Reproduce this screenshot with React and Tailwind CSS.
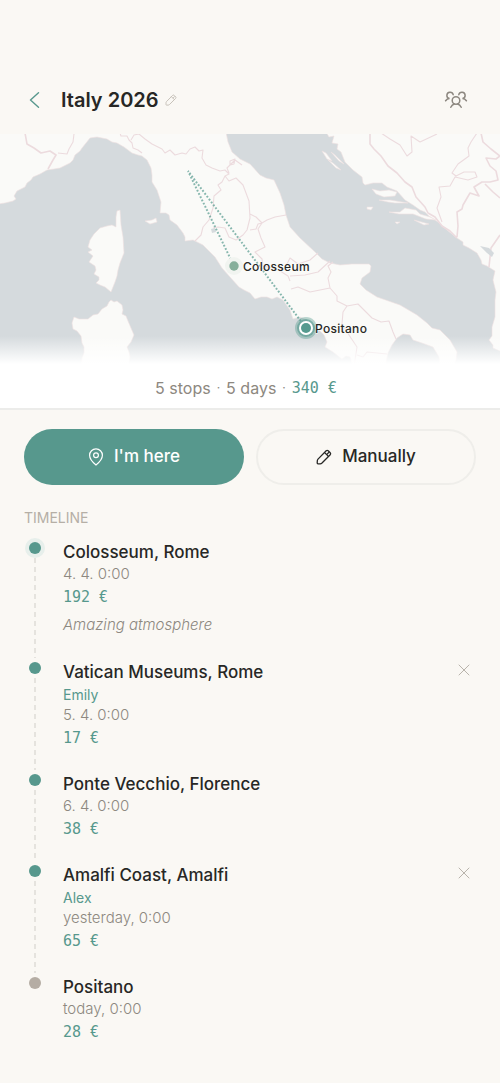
import { useState } from "react";

const stops = [
  {
    id: 1,
    name: "Colosseum, Rome",
    date: "4. 4. 0:00",
    price: "192 €",
    note: "Amazing atmosphere",
    current: true,
  },
  {
    id: 2,
    name: "Vatican Museums, Rome",
    author: "Emily",
    date: "5. 4. 0:00",
    price: "17 €",
  },
  { id: 3, name: "Ponte Vecchio, Florence", date: "6. 4. 0:00", price: "38 €" },
  {
    id: 4,
    name: "Amalfi Coast, Amalfi",
    author: "Alex",
    date: "yesterday, 0:00",
    price: "65 €",
  },
  {
    id: 5,
    name: "Positano",
    date: "today, 0:00",
    price: "28 €",
    muted: true,
  },
];

const land = [
  // France and Italy
  "M-2 132H226L228 142L232 152L240 159L250 164L260 175L266 178L274 180L280 193L284 205L286 215L290 227L300 238L315 252L322 259L330 263L340 265L352 264L369 264L371 266L370 272L362 278L360 284L366 290L377 297L400 305L417 315L427 323L432 328L440 330L450 340L457 352L456 360L453 367H440L439 357L433 347L422 343L413 340L410 335L403 334L397 338L392 345L388 353L385 367H353L350 357L346 356L342 359L333 352L325 347L327 342L324 335L317 328L307 320L300 317L293 319L290 310L283 300L277 297L272 299L267 297L261 297L255 299L250 293L244 290L239 287L230 277L222 268L215 257L203 245L193 240L185 241L185 237L183 233L177 225L170 220L169 215L166 213L163 213L160 213L161 202L157 190L152 182L152 175L151 168L147 160L142 156L138 155L132 153L124 147L117 143L112 142L107 139L97 137L90 138L86 143L82 148L80 151L75 155L73 160L70 163L60 168L54 169L47 170L40 174L33 177L31 180L27 183L25 187L17 191L14 196L16 199L13 201L5 203L-2 204Z",
  // Balkans
  "M326 132L329 137L334 136L332 143L338 144L337 149L341 152L345 162L353 170L362 177L363 183L365 185L373 183L382 183L387 187L397 191L405 200L413 205L420 210L425 212L429 216L438 222L447 230L457 238L463 242L463 245L469 248L477 253L481 260L482 264L487 266L495 271L493 280L496 292L495 300L495 308L495 317L492 327L492 336L489 340L493 345L493 348L502 352V132Z",
  // Corsica
  "M117 211L120 210L121 225L123 237L124 253L120 263L118 270L117 276L115 282L113 287L111 292L105 287L100 285L96 283L99 280L99 277L94 274L96 270L95 266L89 262L93 256L88 252L92 250L88 247L90 240L94 234L100 228L107 226L112 225L116 227L116 217Z",
  // Sardinia
  "M111 300L114 302L117 301L122 305L123 310L122 314L126 316L128 321L131 328L134 335L131 342L127 347L129 352L130 357L128 368H81L82 358L84 353L84 347L82 343L81 336L77 331L73 329L72 323L74 317L79 319L88 319L93 315L98 314L102 309L107 306L109 302Z",
  // islands
  "M322 151L326 153L332 161L327 159ZM331 152L335 155L344 164L339 161ZM328 160L333 163L341 170L336 168ZM372 189L380 191L389 190L397 192L395 196L384 197L376 194ZM379 200L390 200L408 203L395 203L388 202ZM367 207L373 207L371 210L367 209ZM389 212L400 212L405 208L416 210L420 214L430 217L436 220L426 219L413 214L399 214ZM414 220L429 224L424 225ZM395 222L400 222L397 224ZM145 221L152 220L156 218L157 222L150 224Z",
];

const regions =
  "M120 133L121 136L127 136L129 140L132 143L133 148L138 150L142 153M131 140L134 135L139 134L145 139L152 144L162 149L165 153L170 150L175 155L182 153L186 154L190 149L195 147L199 151L203 150L202 158L206 165L212 168L220 171L225 170L229 174L225 176L222 182L218 185L221 190L214 196L213 208L209 220L203 227L201 235L195 241M229 173L227 168L235 160L242 165M230 161L235 159L234 164L230 165ZM225 176L229 181L236 178L243 185L249 201L250 218L247 230L243 235L236 240L229 237L225 228L218 227L213 228M250 214L256 217L262 223L267 220L275 217L286 215M262 223L258 229L261 238L265 247L255 252L262 259L263 266L277 269L288 276L290 281M250 230L256 229L258 224L262 223M286 266L290 258L298 264L310 260L318 253M290 276L305 275L318 272L330 261M291 289L298 287L310 292L325 289L330 288L328 278L331 272L328 266L333 262M330 288L337 296L337 301L347 306L343 312L342 324L349 335L357 347L354 367M347 306L358 304L365 311L372 318L381 322L389 321L393 332L396 339M381 133L390 139L400 145L407 156L412 152L411 136L420 142L437 134M477 133L471 142L468 148L469 156L458 164L452 173L456 176L464 172L475 172L477 177L468 180L455 177L450 186L439 187L441 197L437 208L442 222M357 355L363 357L367 352L377 353L387 354M74 134L73 142L69 149L67 154L58 153";

const countries =
  "M25 133L27 144L34 148L41 153L50 151L56 155L53 160L48 169M370 133L370 144L374 149L381 156L388 166L397 173L405 182L412 187L416 197L425 207L428 213L435 217L442 226L450 231L457 238M481 133L483 142L491 149L500 156L496 159L486 158L490 166L496 171L498 180L490 182L482 182L474 187L479 196L470 193L463 205L462 209L457 212L458 226L457 237M485 184L493 192L500 198M500 235L491 248L489 267";

function PencilIcon({ className }) {
  return (
    <svg
      className={className}
      viewBox="0 0 16 16"
      fill="none"
      stroke="currentColor"
      strokeWidth="1.3"
      strokeLinejoin="round"
      strokeLinecap="round"
      aria-hidden="true"
    >
      <path d="M1.3 12.2Q1.2 11 2 10.1L10.2 1.8Q11.2 .9 12.2 1.8L14.2 3.8Q15.1 4.8 14.2 5.8L6 14Q5.2 14.7 4.2 14.8L2 14.8Q1.2 14.7 1.2 14Z" />
      <path d="M8.600 3.600L12.400 7.400M11 5.200L12.800 3.400" />
    </svg>
  );
}

function GroupIcon() {
  return (
    <svg
      className="h-5 w-6"
      viewBox="0 0 24 20"
      fill="none"
      stroke="currentColor"
      strokeWidth="1.500"
      strokeLinecap="round"
      aria-hidden="true"
    >
      <circle cx="12" cy="10.500" r="3.800" />
      <path d="M6.800 17.300C7.600 15.600 9 14.300 10.300 14M17.200 17.300C16.400 15.600 15 14.300 13.700 14" />
      <path d="M9.200 4.700A3.200 3.200 0 1 0 5.500 8.500C3.700 8.700 2.500 9.500 1.600 10.800" />
      <path d="M14.800 4.700A3.200 3.200 0 1 1 18.500 8.500C20.300 8.700 21.500 9.500 22.400 10.800" />
    </svg>
  );
}

function TripMap() {
  return (
    <svg
      className="block h-auto w-full bg-[#d5dadd]"
      viewBox="0 134 500 232"
      role="img"
      aria-label="Trip map"
    >
      <defs>
        <linearGradient id="fade" x1="0" y1="0" x2="0" y2="1">
          <stop offset="0" stopColor="#fff" stopOpacity="0" />
          <stop offset="0.9" stopColor="#fff" />
        </linearGradient>
      </defs>
      <g fill="#fafaf8" stroke="#f0e0e0" strokeWidth="0.6">
        {land.map((d) => (
          <path key={d} d={d} />
        ))}
      </g>
      <g fill="none" stroke="#ecdbde" strokeLinejoin="round">
        <path d={regions} strokeWidth="1.1" />
        <path d={countries} strokeWidth="1.600" />
      </g>
      <path
        d="M211 229L215 228L216 232L212 233ZM480 246L489 248L494 253L492 257L487 253Z"
        fill="#d5dadd"
      />
      <g
        fill="none"
        stroke="#559a8f"
        strokeOpacity="0.700"
        strokeWidth="2"
        strokeDasharray="1.800 1.800"
      >
        <path d="M234 266L188 171L306 328" />
      </g>
      <rect x="0" y="336" width="500" height="31" fill="url(#fade)" />
      <circle cx="234" cy="266" r="9" fill="#f1f4f0" />
      <circle cx="234" cy="266" r="4.700" fill="#87af9b" />
      <circle cx="306" cy="328" r="11" fill="#559a8f" fillOpacity="0.400" />
      <circle cx="306" cy="328" r="9" fill="#559a8f" fillOpacity="0.600" />
      <circle cx="306" cy="328" r="7" fill="#fff" />
      <circle cx="306" cy="328" r="5" fill="#559a8f" />
      <g
        className="font-['Inter',sans-serif] text-xs font-medium tracking-wide"
        fill="#272725"
        stroke="#fafaf8"
        strokeWidth="1"
        paintOrder="stroke"
      >
        <text x="243" y="271">
          Colosseum
        </text>
        <text x="315" y="333">
          Positano
        </text>
      </g>
    </svg>
  );
}

function Stop({ stop, last, onRemove }) {
  return (
    <li className="flex gap-[17px]">
      <div className="flex w-[22px] shrink-0 flex-col items-center">
        <span
          className={`grid size-5 shrink-0 place-items-center rounded-full ${
            stop.current ? "bg-[#e7efeb]" : ""
          }`}
        >
          <span
            className={`size-3 rounded-full ${
              stop.muted ? "bg-[#b5ada4]" : "bg-[#57988d]"
            }`}
          />
        </span>
        {!last && (
          <span className="w-0.5 flex-1 bg-[repeating-linear-gradient(to_bottom,#e5e3de_0px,#e5e3de_5px,transparent_5px,transparent_9px)]" />
        )}
      </div>

      <div className="min-w-0 flex-1 pt-0.5 pb-[19px]">
        <h3 className="text-[17px] leading-6 font-medium text-[#272725]">
          {stop.name}
        </h3>
        {stop.author && (
          <p className="text-sm leading-[21px] text-[#57988d]">{stop.author}</p>
        )}
        <p className="text-[15px] leading-5 font-light text-[#8d8880]">
          {stop.date}
        </p>
        <p className="font-['DejaVu_Sans_Mono',monospace] text-[15px] leading-[26px] text-[#57988d]">
          {stop.price}
        </p>
        {stop.note && (
          <p className="text-[15px] leading-[29px] font-light text-[#8d8880] italic">
            {stop.note}
          </p>
        )}
      </div>

      {stop.author && (
        <button
          type="button"
          aria-label={`Remove ${stop.name}`}
          onClick={() => onRemove(stop.id)}
          className="grid size-6 shrink-0 place-items-center text-[#b9b4ac]"
        >
          <svg
            className="size-3"
            viewBox="0 0 12 12"
            stroke="currentColor"
            strokeLinecap="round"
            aria-hidden="true"
          >
            <path d="M1 1L11 11M11 1L1 11" />
          </svg>
        </button>
      )}
    </li>
  );
}

export default function App() {
  const [items, setItems] = useState(stops);

  const removeStop = (id) => setItems(items.filter((s) => s.id !== id));

  return (
    <div className="min-h-screen bg-[#faf8f4] font-['Inter',sans-serif]">
      <header className="flex items-center px-6 pt-20 pb-[14px]">
        <button
          type="button"
          aria-label="Back"
          className="flex h-10 w-[37px] items-center pl-[5px] text-[#57988d]"
        >
          <svg
            className="h-4 w-3"
            viewBox="0 0 12 16"
            fill="none"
            stroke="currentColor"
            strokeWidth="1.400"
            strokeLinecap="round"
            strokeLinejoin="round"
            aria-hidden="true"
          >
            <path d="M9.500 .8L1.500 8L9.500 15.200" />
          </svg>
        </button>
        <h1 className="text-xl leading-7 font-semibold text-[#272725]">
          Italy 2026
        </h1>
        <button
          type="button"
          aria-label="Rename trip"
          className="ml-1.5 text-[#c5c0b8]"
        >
          <PencilIcon className="size-3" />
        </button>
        <button
          type="button"
          aria-label="Travellers"
          className="ml-auto pr-2 text-[#8d8880]"
        >
          <GroupIcon />
        </button>
      </header>

      <section className="border-b-2 border-[#ececea] bg-white">
        <TripMap />
        <p className="flex items-center justify-center gap-1.5 pt-[10px] pr-2 pb-2 text-base leading-6 text-[#8d8880]">
          <span>5 stops</span>
          <span className="text-xs">·</span>
          <span>5 days</span>
          <span className="text-xs">·</span>
          <span className="font-['DejaVu_Sans_Mono',monospace] text-[15px] text-[#57988d]">
            340 €
          </span>
        </p>
      </section>

      <main className="px-6 pt-[19px] pb-4">
        <div className="grid grid-cols-2 gap-3">
          <button
            type="button"
            className="flex h-14 items-center justify-center gap-2.5 rounded-full bg-[#57988d] text-[17px] font-medium text-white"
          >
            <svg
              className="h-[18px] w-4"
              viewBox="0 0 16 18"
              fill="none"
              stroke="currentColor"
              strokeWidth="1.200"
              aria-hidden="true"
            >
              <path d="M8 17C5.500 15 1.600 11.500 1.600 7.300A6.400 6.400 0 0 1 14.400 7.300C14.400 11.500 10.500 15 8 17Z" />
              <circle cx="8" cy="7.300" r="2.400" />
            </svg>
            I'm here
          </button>
          <button
            type="button"
            className="flex h-14 items-center justify-center gap-2.5 rounded-full border-2 border-[#efeeea] text-[17px] font-medium text-[#272725]"
          >
            <PencilIcon className="size-4" />
            Manually
          </button>
        </div>

        <h2 className="pt-[23px] pb-2.5 text-sm leading-5 text-[#b5afa6] uppercase">
          Timeline
        </h2>

        <ol>
          {items.map((stop, i) => (
            <Stop
              key={stop.id}
              stop={stop}
              last={i === items.length - 1}
              onRemove={removeStop}
            />
          ))}
        </ol>
      </main>
    </div>
  );
}
